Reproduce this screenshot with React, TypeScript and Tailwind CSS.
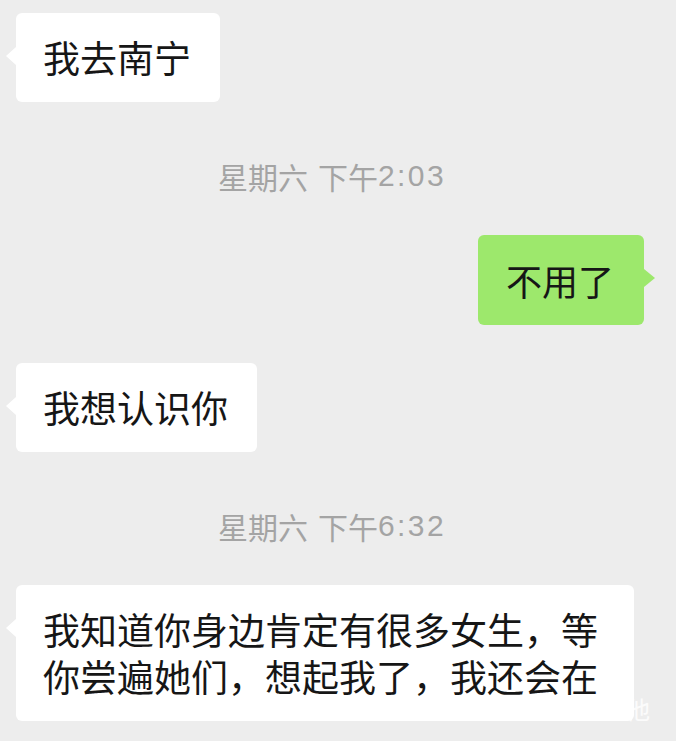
import React from "react";

const cjk = { fontFamily: '"Noto Sans CJK SC", "Noto Sans", sans-serif' };
const stamp = { fontFamily: '"Liberation Sans", "Noto Sans CJK SC", sans-serif' };

function Incoming({ children, wide }: { children: React.ReactNode; wide?: boolean }) {
  return (
    <div className="flex justify-start pl-4">
      <div
        className={`relative z-10 rounded-[6px] bg-white py-[21px] pl-[27px] pr-[29px] text-[37px] leading-[47px] text-[#161616] ${
          wide ? "max-w-[618px]" : ""
        }`}
        style={cjk}
      >
        <span className="absolute left-[-10px] top-[34px] h-0 w-0 border-y-[9px] border-r-[10px] border-y-transparent border-r-white" />
        {children}
      </div>
    </div>
  );
}

function Outgoing({ children }: { children: React.ReactNode }) {
  return (
    <div className="flex justify-end pr-8">
      <div
        className="relative rounded-[6px] bg-[#9de86c] py-[21px] pl-[28px] pr-[30px] text-[36px] leading-[48px] text-[#161616]"
        style={cjk}
      >
        <span className="absolute right-[-11px] top-[34px] h-0 w-0 border-y-[9px] border-l-[11px] border-y-transparent border-l-[#9de86c]" />
        {children}
      </div>
    </div>
  );
}

function TimeStamp({ day, time }: { day: string; time: string }) {
  return (
    <div className="flex h-[30px] items-center justify-center pr-[12px] text-[30px] leading-[30px] text-[#a4a4a4]">
      <span style={cjk}>{day}</span>
      <span className="w-[10px]" />
      <span style={cjk}>下午</span>
      <span style={stamp} className="tracking-[2.4px]">
        {time}
      </span>
    </div>
  );
}

export default function App() {
  return (
    <div className="relative flex h-[741px] w-full flex-col overflow-hidden bg-[#ededed] pt-[13px]">
      <Incoming>我去南宁</Incoming>
      <div className="mt-[59px]">
        <TimeStamp day="星期六" time="2:03" />
      </div>
      <div className="mt-[44px]">
        <Outgoing>不用了</Outgoing>
      </div>
      <div className="mt-[38px]">
        <Incoming>我想认识你</Incoming>
      </div>
      <div className="mt-[59px]">
        <TimeStamp day="星期六" time="6:32" />
      </div>
      <div className="mt-[44px]">
        <Incoming wide>
          我知道你身边肯定有很多女生，等你尝遍她们，想起我了，我还会在
        </Incoming>
      </div>
      <span
        className="absolute left-[626px] top-[694px] text-[24px] leading-[30px] text-white/80"
        style={cjk}
      >
        他
      </span>
    </div>
  );
}
